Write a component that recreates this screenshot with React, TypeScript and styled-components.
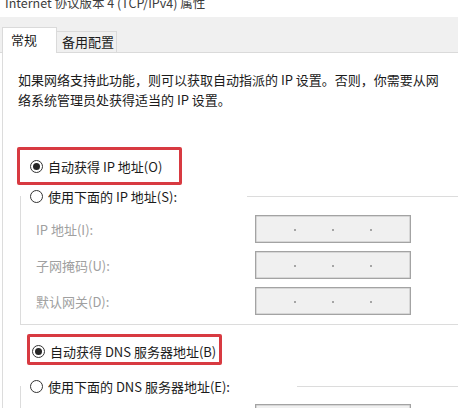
import React from 'react'
import styled, { createGlobalStyle } from 'styled-components'

const Global = createGlobalStyle`
  html, body {
    margin: 0;
    padding: 0;
    background: #ffffff;
    overflow: hidden;
  }
  body {
    font-family: "Noto Sans CJK SC", "Noto Sans", sans-serif;
    font-size: 13px;
    color: #1b1b1b;
  }
`

const Window = styled.div`
  width: 458px;
  height: 408px;
  overflow: hidden;
  display: flex;
  flex-direction: column;
`

const TitleBar = styled.div`
  height: 17px;
  overflow: hidden;
  padding-left: 5px;
`

const TitleText = styled.div`
  margin-top: -6px;
  line-height: 17px;
  font-size: 12.5px;
  color: #3c3c3c;
  white-space: nowrap;
`

const TabStrip = styled.div`
  height: 36px;
  box-sizing: border-box;
  background: #f0f0f0;
  border-bottom: 1px solid #dadada;
  display: flex;
  align-items: flex-end;
  padding-left: 2px;
`

const Tab = styled.div<{ $active?: boolean }>`
  box-sizing: border-box;
  display: flex;
  align-items: center;
  white-space: nowrap;
  border: 1px solid #dadada;
  border-bottom: none;
  ${({ $active }) =>
    $active
      ? `
    width: 55px;
    height: 26px;
    margin-bottom: -1px;
    padding: 0 0 2px 8px;
    background: #ffffff;
  `
      : `
    width: 60px;
    height: 21px;
    padding: 0 0 1px 5px;
    border-left: none;
    background: #f0f0f0;
  `}
`

const Panel = styled.div`
  flex: 1;
  border-left: 1px solid #dcdcdc;
  margin-left: 2px;
  overflow: hidden;
`

const Intro = styled.p`
  margin: 17px 0 0 15px;
  line-height: 20px;
  white-space: nowrap;
`

const Highlight = styled.div<{
  $left: number
  $width: number
  $height: number
  $top: number
  $padTop: number
  $padLeft: number
}>`
  box-sizing: border-box;
  margin: ${({ $top }) => $top}px 0 0 ${({ $left }) => $left}px;
  width: ${({ $width }) => $width}px;
  height: ${({ $height }) => $height}px;
  border: 3px solid #d83a41;
  border-radius: 2px;
  padding: ${({ $padTop }) => $padTop}px 0 0 ${({ $padLeft }) => $padLeft}px;
  display: flex;
  align-items: ${({ $padTop }) => ($padTop ? 'flex-start' : 'center')};
`

const RadioRow = styled.div`
  display: flex;
  align-items: center;
  height: 20px;
  white-space: nowrap;
`

const RadioCircle = styled.span<{ $checked?: boolean }>`
  box-sizing: border-box;
  width: 13px;
  height: 13px;
  border: 1px solid #333333;
  border-radius: 50%;
  margin-right: 5px;
  display: flex;
  align-items: center;
  justify-content: center;
  flex-shrink: 0;

  &::after {
    content: '';
    width: 7px;
    height: 7px;
    border-radius: 50%;
    background: ${({ $checked }) => ($checked ? '#262626' : 'transparent')};
  }
`

const Group = styled.fieldset<{ $top: number }>`
  margin: ${({ $top }) => $top}px 0 0 17px;
  padding: 0;
  border: 1px solid #dcdcdc;
  border-right: none;
  min-width: 0;
`

const Legend = styled.legend<{ $width: number }>`
  box-sizing: border-box;
  width: ${({ $width }) => $width}px;
  height: 22px;
  padding: 1px 0 0 9px;
`

const FieldGrid = styled.div<{ $padTop: number }>`
  display: grid;
  grid-template-columns: 219px 156px;
  grid-auto-rows: 28px;
  row-gap: 8px;
  padding: ${({ $padTop }) => $padTop}px 0 9px 15px;
`

const FieldLabel = styled.div`
  display: flex;
  align-items: center;
  color: #a0a0a0;
  white-space: nowrap;
`

const IpBox = styled.div`
  box-sizing: border-box;
  background: #f0f0f0;
  border: 1px solid #a3a3a3;
  box-shadow: inset 0 0 0 0.5px #bdbdbd;
  display: flex;
  align-items: center;
  justify-content: center;
  gap: 36px;
`

const IpDot = styled.span`
  width: 2px;
  height: 2px;
  border-radius: 50%;
  background: #8c8c8c;
  margin-top: 2px;
`

const IpField = () => (
  <IpBox>
    <IpDot />
    <IpDot />
    <IpDot />
  </IpBox>
)

const Radio = ({ checked, label }: { checked?: boolean; label: string }) => (
  <RadioRow>
    <RadioCircle $checked={checked} />
    {label}
  </RadioRow>
)

const App = () => (
  <Window>
    <Global />
    <TitleBar>
      <TitleText>Internet 协议版本 4 (TCP/IPv4) 属性</TitleText>
    </TitleBar>
    <TabStrip>
      <Tab $active>常规</Tab>
      <Tab>备用配置</Tab>
    </TabStrip>
    <Panel>
      <Intro>
        如果网络支持此功能，则可以获取自动指派的 IP 设置。否则，你需要从网
        <br />
        络系统管理员处获得适当的 IP 设置。
      </Intro>

      <Highlight $top={37} $left={14} $width={165} $height={38} $padTop={0} $padLeft={10}>
        <Radio checked label="自动获得 IP 地址(O)" />
      </Highlight>

      <Group $top={0}>
        <Legend $width={226}>
          <Radio label="使用下面的 IP 地址(S):" />
        </Legend>
        <FieldGrid $padTop={8}>
          <FieldLabel>IP 地址(I):</FieldLabel>
          <IpField />
          <FieldLabel>子网掩码(U):</FieldLabel>
          <IpField />
          <FieldLabel>默认网关(D):</FieldLabel>
          <IpField />
        </FieldGrid>
      </Group>

      <Highlight $top={9} $left={24} $width={195} $height={31} $padTop={4} $padLeft={2}>
        <Radio checked label="自动获得 DNS 服务器地址(B)" />
      </Highlight>

      <Group $top={10}>
        <Legend $width={276}>
          <Radio label="使用下面的 DNS 服务器地址(E):" />
        </Legend>
        <FieldGrid $padTop={7}>
          <FieldLabel>首选 DNS 服务器(P):</FieldLabel>
          <IpField />
          <FieldLabel>备用 DNS 服务器(A):</FieldLabel>
          <IpField />
        </FieldGrid>
      </Group>
    </Panel>
  </Window>
)

export default App
